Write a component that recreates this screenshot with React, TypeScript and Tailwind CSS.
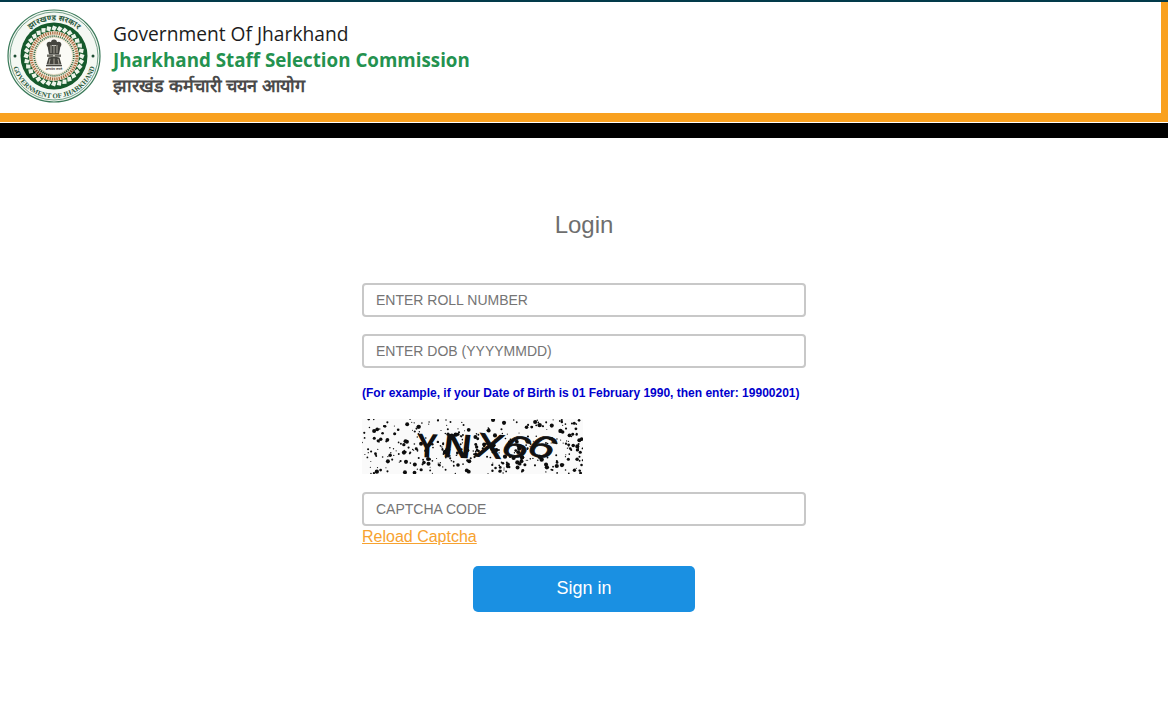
import React from 'react';

// small seeded generator so the captcha noise stays the same on every render
const speckles = (() => {
  const dots: { x: number; y: number; r: number }[] = [];
  let seed = 7919;
  const next = () => {
    seed = (seed * 16807) % 2147483647;
    return seed / 2147483647;
  };
  for (let i = 0; i < 380; i++) {
    dots.push({ x: next() * 221, y: next() * 55, r: next() < 0.6 ? 0.5 + next() * 0.6 : 1 + next() * 1.2 });
  }
  return dots;
})();

const ticks = Array.from({ length: 32 }, (_, i) => (i * 360) / 32);

const Emblem = () => (
  <svg width="94" height="94" viewBox="0 0 94 94" className="shrink-0">
    <defs>
      <path id="arcTop" d="M 11.500 47 A 35.500 35.500 0 0 1 82.500 47" />
      <path id="arcBottom" d="M 4.800 47 A 42.200 42.200 0 0 0 89.200 47" />
    </defs>
    <circle cx="47" cy="47" r="46" fill="#f4f8f3" stroke="#3b7a5a" strokeWidth="1.200" />
    <circle cx="47" cy="47" r="44" fill="none" stroke="#3b7a5a" strokeWidth="0.700" />
    <circle cx="47" cy="47" r="33.500" fill="#14592b" />
    {ticks.map(a => (
      <path key={a} d="M46 16.500l4 1.500-2 4-3.500-1.500z" fill="#eef4ea" transform={`rotate(${a} 47 47)`} />
    ))}
    <circle cx="47" cy="47" r="25" fill="#efe4d0" />
    <circle cx="47" cy="47" r="23" fill="none" stroke="#a9683f" strokeWidth="3" strokeDasharray="1.200 1.100" />
    <circle cx="47" cy="47" r="19.800" fill="none" stroke="#2f6b4a" strokeWidth="1.800" strokeDasharray="1 1.100" />
    <circle cx="47" cy="47" r="18" fill="#fbfbf6" />
    {/* lion capital */}
    <g fill="#45453f">
      <circle cx="47" cy="33.500" r="3" />
      <circle cx="42.500" cy="35.500" r="2.800" />
      <circle cx="51.500" cy="35.500" r="2.800" />
      <path d="M40.500 37h13l-1.500 8.500h-10z" />
      <rect x="40" y="45.500" width="14" height="2.400" fill="#6a6a62" />
      <path d="M41.500 48.500q5.500-1.500 11 0l2 7h-15z" />
      <rect x="39" y="56" width="16" height="1.300" />
    </g>
    <path d="M44 36v8M47 36v8.500M50 36v8M43 50l-1 5M47 49.500v6M51 50l1 5" stroke="#d2cfc0" strokeWidth="0.700" fill="none" />
    <circle cx="47" cy="46.700" r="0.900" fill="#e5e2d5" />
    <text x="47" y="61" textAnchor="middle" fontSize="3.200" fill="#55554e" fontFamily="'Noto Sans', sans-serif" fontWeight="700">
      सत्यमेव जयते
    </text>
    <circle cx="8" cy="47" r="1.500" fill="#1d4d33" />
    <circle cx="86" cy="47" r="1.500" fill="#1d4d33" />
    <text fontSize="8" fill="#2b5a3d" fontFamily="'Noto Sans', sans-serif" fontWeight="700">
      <textPath href="#arcTop" startOffset="50%" textAnchor="middle">
        झारखण्ड सरकार
      </textPath>
    </text>
    <text fontSize="7" fill="#2b5a3d" fontFamily="'Liberation Serif', serif" fontWeight="700">
      <textPath href="#arcBottom" startOffset="50%" textAnchor="middle">
        GOVERNMENT OF JHARKHAND
      </textPath>
    </text>
  </svg>
);

const Captcha = () => (
  <svg width="221" height="55" viewBox="0 0 221 55" className="block">
    <rect width="221" height="55" fill="#fafafa" />
    {speckles.map((d, i) => (
      <circle key={i} cx={d.x} cy={d.y} r={d.r} fill="#0c0c0c" />
    ))}
    <g fontFamily="'Liberation Sans', sans-serif" fontSize="34" fontWeight="700" fill="#111111">
      <text transform="translate(54 38) rotate(2) scale(0.95 1)">Y</text>
      <text transform="translate(80 38) rotate(3) skewX(-4) scale(1.15 1)">N</text>
      <text transform="translate(112 37) rotate(6) skewX(-6) scale(1.2 1)" fontWeight="400" stroke="#111111" strokeWidth="1">X</text>
      <text transform="translate(136 34) rotate(16) skewX(-18) scale(1.35 0.95)" fontWeight="400" stroke="#111111" strokeWidth="0.8">6</text>
      <text transform="translate(162 34) rotate(16) skewX(-18) scale(1.35 0.95)" fontWeight="400" stroke="#111111" strokeWidth="0.8">6</text>
    </g>
  </svg>
);

const fieldClass =
  'block w-full h-[34px] rounded-[4px] border-2 border-[#c8c8c8] bg-white px-3 text-sm text-[#555555] outline-none placeholder:text-[#757575]';

const App: React.FC = () => {
  return (
    <div className="min-h-[709px] bg-white font-['Liberation_Sans',Arial,sans-serif]">
      <header className="border-t-2 border-[#023a4a]">
        <div className="flex h-[120px] items-start border-r-[7px] border-b-[9px] border-[#f9a11f] pl-[7px] pt-[7px]">
          <Emblem />
          <div className="ml-3 flex flex-col pt-[11px] font-['Open_Sans',sans-serif]">
            <p className="text-[19.200px] leading-[27px] text-[#1c1c1c]">Government Of Jharkhand</p>
            <p className="text-[18.750px] font-bold leading-[26px] text-[#24924f]">Jharkhand Staff Selection Commission</p>
            <p className="text-[17.900px] font-bold leading-[24px] text-[#4a4a4a]">झारखंड कर्मचारी चयन आयोग</p>
          </div>
        </div>
        <div className="mt-px h-[15px] bg-black" />
      </header>

      <main className="mx-auto flex w-[444px] flex-col pt-[72px]">
        <h1 className="text-center text-2xl leading-[30px] text-[#6e6e6e]">Login</h1>

        <input className={`${fieldClass} mt-[43px]`} placeholder="ENTER ROLL NUMBER" />
        <input className={`${fieldClass} mt-[17px]`} placeholder="ENTER DOB (YYYYMMDD)" />

        <p className="mt-[17px] whitespace-nowrap text-xs font-bold leading-[16px] text-[#0000cd]">
          (For example, if your Date of Birth is 01 February 1990, then enter: 19900201)
        </p>

        <div className="mt-[18px]">
          <Captcha />
        </div>

        <input className={`${fieldClass} mt-[18px]`} placeholder="CAPTCHA CODE" />

        <a className="mt-px self-start text-base leading-[20px] text-[#f7a230] underline" href="#">
          Reload Captcha
        </a>

        <button className="mt-[19px] h-[46px] w-[222px] self-center rounded-[5px] bg-[#1a90e2] pb-[2px] text-lg text-white">
          Sign in
        </button>
      </main>
    </div>
  );
};

export default App;
